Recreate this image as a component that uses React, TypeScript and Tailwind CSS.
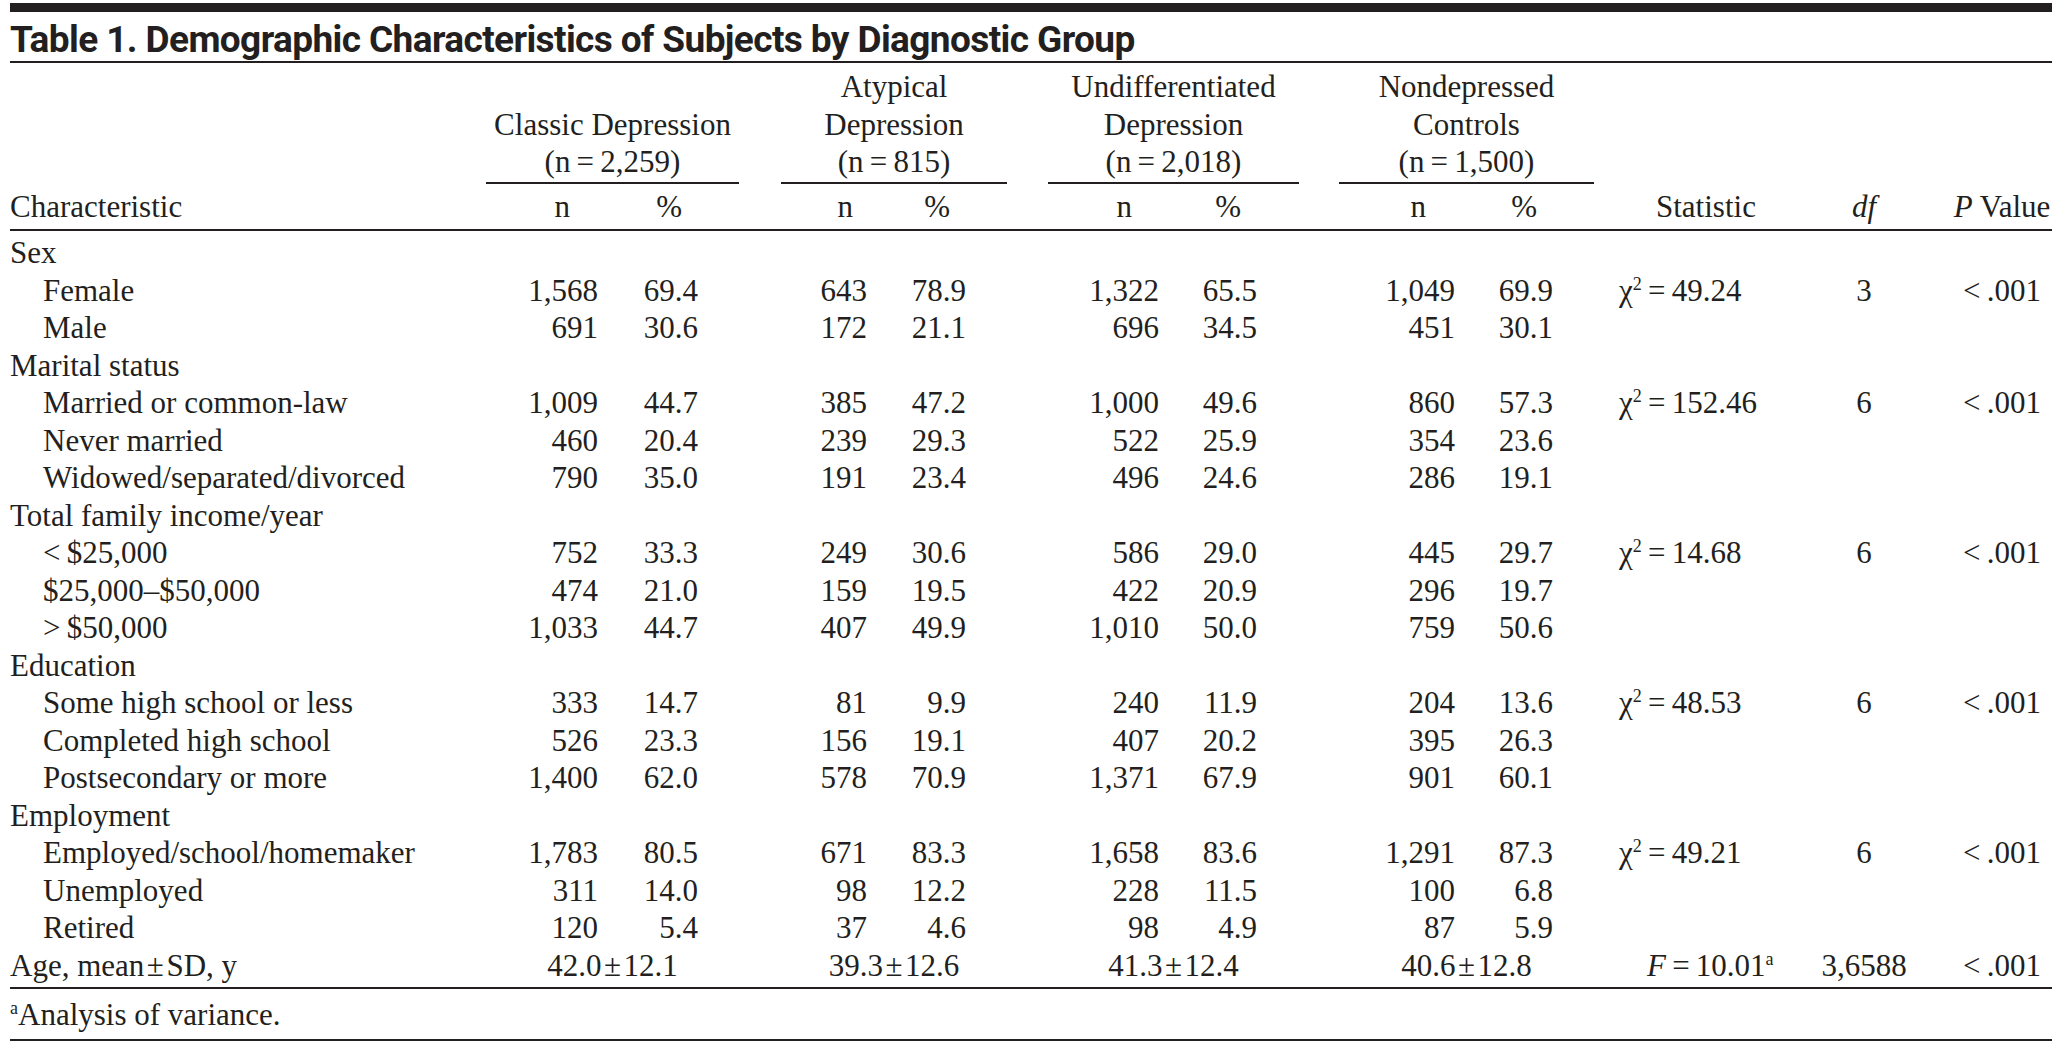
import type { ReactNode } from "react";

const GRID =
  "grid grid-cols-[476px_253px_42px_226px_41px_251px_40px_255px_182px_176px_100px]";

const TH = "\u2009"; // thin space
const HR = "\u200a"; // hair space

type Group = {
  lines: string[];
  n: string;
  pct: string;
  nHead: string;
};

const GROUPS: Group[] = [
  { lines: ["Classic Depression", `(n${TH}=${TH}2,259)`], n: "w-[112px]", pct: "w-[100px]", nHead: "pr-[28px]" },
  { lines: ["Atypical", "Depression", `(n${TH}=${TH}815)`], n: "w-[86px]", pct: "w-[99px]", nHead: "pr-[14px]" },
  { lines: ["Undifferentiated", "Depression", `(n${TH}=${TH}2,018)`], n: "w-[111px]", pct: "w-[98px]", nHead: "pr-[27px]" },
  { lines: ["Nondepressed", "Controls", `(n${TH}=${TH}1,500)`], n: "w-[116px]", pct: "w-[98px]", nHead: "pr-[29px]" },
];

type Row = {
  label: string;
  sub?: boolean;
  vals?: [string, string][];
  mean?: string[];
  stat?: ReactNode;
  statPad?: string;
  df?: string;
  p?: string;
};

function Chi({ v }: { v: string }) {
  return (
    <span>
      χ<sup className="text-[18px] -top-[11px]">2</sup>
      {TH}={TH}
      {v}
    </span>
  );
}

const P = `<${TH}.001`;

const ROWS: Row[] = [
  { label: "Sex" },
  { label: "Female", sub: true, vals: [["1,568", "69.4"], ["643", "78.9"], ["1,322", "65.5"], ["1,049", "69.9"]], stat: <Chi v="49.24" />, df: "3", p: P },
  { label: "Male", sub: true, vals: [["691", "30.6"], ["172", "21.1"], ["696", "34.5"], ["451", "30.1"]] },
  { label: "Marital status" },
  { label: "Married or common-law", sub: true, vals: [["1,009", "44.7"], ["385", "47.2"], ["1,000", "49.6"], ["860", "57.3"]], stat: <Chi v="152.46" />, df: "6", p: P },
  { label: "Never married", sub: true, vals: [["460", "20.4"], ["239", "29.3"], ["522", "25.9"], ["354", "23.6"]] },
  { label: "Widowed/separated/divorced", sub: true, vals: [["790", "35.0"], ["191", "23.4"], ["496", "24.6"], ["286", "19.1"]] },
  { label: "Total family income/year" },
  { label: `<${TH}$25,000`, sub: true, vals: [["752", "33.3"], ["249", "30.6"], ["586", "29.0"], ["445", "29.7"]], stat: <Chi v="14.68" />, df: "6", p: P },
  { label: "$25,000–$50,000", sub: true, vals: [["474", "21.0"], ["159", "19.5"], ["422", "20.9"], ["296", "19.7"]] },
  { label: `>${TH}$50,000`, sub: true, vals: [["1,033", "44.7"], ["407", "49.9"], ["1,010", "50.0"], ["759", "50.6"]] },
  { label: "Education" },
  { label: "Some high school or less", sub: true, vals: [["333", "14.7"], ["81", "9.9"], ["240", "11.9"], ["204", "13.6"]], stat: <Chi v="48.53" />, df: "6", p: P },
  { label: "Completed high school", sub: true, vals: [["526", "23.3"], ["156", "19.1"], ["407", "20.2"], ["395", "26.3"]] },
  { label: "Postsecondary or more", sub: true, vals: [["1,400", "62.0"], ["578", "70.9"], ["1,371", "67.9"], ["901", "60.1"]] },
  { label: "Employment" },
  { label: "Employed/school/homemaker", sub: true, vals: [["1,783", "80.5"], ["671", "83.3"], ["1,658", "83.6"], ["1,291", "87.3"]], stat: <Chi v="49.21" />, df: "6", p: P },
  { label: "Unemployed", sub: true, vals: [["311", "14.0"], ["98", "12.2"], ["228", "11.5"], ["100", "6.8"]] },
  { label: "Retired", sub: true, vals: [["120", "5.4"], ["37", "4.6"], ["98", "4.9"], ["87", "5.9"]] },
  {
    label: `Age, mean${HR}±${HR}SD, y`,
    mean: [`42.0${HR}±${HR}12.1`, `39.3${HR}±${HR}12.6`, `41.3${HR}±${HR}12.4`, `40.6${HR}±${HR}12.8`],
    stat: (
      <span>
        <i>F</i>
        {TH}={TH}10.01<sup className="text-[18px] -top-[11px]">a</sup>
      </span>
    ),
    statPad: "pl-[53px]",
    df: "3,6588",
    p: P,
  },
];

function TableRow({ row }: { row: Row }) {
  const cells = GROUPS.map((g, i) => {
    if (row.mean) {
      return <div className="text-center">{row.mean[i]}</div>;
    }
    if (!row.vals) return <div />;
    return (
      <div className="flex">
        <div className={`${g.n} text-right`}>{row.vals[i][0]}</div>
        <div className={`${g.pct} text-right`}>{row.vals[i][1]}</div>
      </div>
    );
  });

  return (
    <div className={`${GRID} leading-[37.5px] h-[37.5px]`}>
      <div className={row.sub ? "pl-[33px]" : ""}>{row.label}</div>
      {cells[0]}
      <div />
      {cells[1]}
      <div />
      {cells[2]}
      <div />
      {cells[3]}
      <div className={`${row.statPad ?? "pl-[25px]"} whitespace-nowrap`}>{row.stat}</div>
      <div className="text-center">{row.df}</div>
      <div className="text-center">{row.p}</div>
    </div>
  );
}

function GroupHead({ g }: { g: Group }) {
  return (
    <div className="flex flex-col justify-end items-center border-b-2 border-[#231f20] pb-[1px]">
      {g.lines.map((l) => (
        <div key={l}>{l}</div>
      ))}
    </div>
  );
}

function SubHead({ g }: { g: Group }) {
  return (
    <div className="flex">
      <div className={`${g.n} text-right ${g.nHead}`}>n</div>
      <div className={`${g.pct} text-right pr-[16px]`}>%</div>
    </div>
  );
}

export default function App() {
  return (
    <div className="w-[2061px] h-[1044px] bg-white text-[#231f20] overflow-hidden">
      <div className="ml-[10px] w-[2042px] pt-[3px]">
        {/* top rule */}
        <div className="h-[9px] bg-[#231f20]" />

        {/* title */}
        <div className="h-[51px] flex items-end pb-[3px] border-b-2 border-[#231f20]">
          <h1 className="font-['Roboto','Liberation_Sans',sans-serif] font-bold text-[37px] leading-none tracking-[-0.6px] whitespace-nowrap">
            Table 1. Demographic Characteristics of Subjects by Diagnostic Group
          </h1>
        </div>

        <div className="font-['Liberation_Serif','Times_New_Roman',serif] text-[31px]">
          {/* column heads */}
          <div className="border-b-2 border-[#231f20] pb-[4px]">
            <div className={`${GRID} leading-[37.5px] pt-[5px]`}>
              <div />
              <GroupHead g={GROUPS[0]} />
              <div />
              <GroupHead g={GROUPS[1]} />
              <div />
              <GroupHead g={GROUPS[2]} />
              <div />
              <GroupHead g={GROUPS[3]} />
              <div />
              <div />
              <div />
            </div>
            <div className={`${GRID} leading-[37.5px] pt-[4px]`}>
              <div>Characteristic</div>
              <SubHead g={GROUPS[0]} />
              <div />
              <SubHead g={GROUPS[1]} />
              <div />
              <SubHead g={GROUPS[2]} />
              <div />
              <SubHead g={GROUPS[3]} />
              <div className="pl-[62px]">Statistic</div>
              <div className="text-center">
                <i>df</i>
              </div>
              <div className="text-center whitespace-nowrap">
                <i>P</i> Value
              </div>
            </div>
          </div>

          {/* body */}
          <div className="pt-[3px] pb-[3px] border-b-2 border-[#231f20]">
            {ROWS.map((r) => (
              <TableRow key={r.label} row={r} />
            ))}
          </div>

          {/* footnote */}
          <div className="pt-[7px] pb-[5px] leading-[37.5px] border-b-2 border-[#231f20]">
            <sup className="text-[18px] -top-[11px]">a</sup>Analysis of variance.
          </div>
        </div>
      </div>
    </div>
  );
}
